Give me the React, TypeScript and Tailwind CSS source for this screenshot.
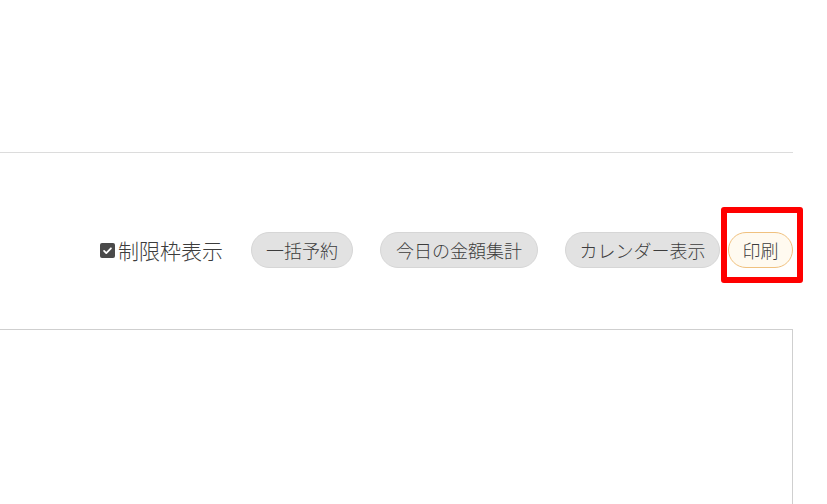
const font = { fontFamily: '"Noto Sans CJK JP", "Noto Sans", sans-serif' };

function PillButton({ label, className = "" }: { label: string; className?: string }) {
  return (
    <button
      type="button"
      className={`flex h-[36px] shrink-0 items-center justify-center rounded-full border border-[#d6d6d6] bg-[#e2e2e2] text-[18px] font-light leading-none text-[#3c3c3c] ${className}`}
    >
      {label}
    </button>
  );
}

export default function App() {
  return (
    <div
      className="h-[504px] w-[827px] overflow-hidden bg-white text-[#3c3c3c]"
      style={font}
    >
      <div className="w-[793px]">
        <div className="h-[153px] border-b border-[#dcdcdc]" />

        <div className="mt-[79px] flex h-[36px] items-center justify-end">
          <label className="flex items-center">
            <span className="flex h-[15px] w-[15px] items-center justify-center rounded-[2px] bg-[#4a4a4a]">
              <svg viewBox="0 0 16 16" className="h-[11px] w-[11px]" fill="none">
                <path
                  d="M3 8.5l3.2 3.2L13 4.8"
                  stroke="#fff"
                  strokeWidth="2.6"
                  strokeLinecap="round"
                  strokeLinejoin="round"
                />
              </svg>
            </span>
            <span className="ml-[3px] text-[21px] font-light leading-none">制限枠表示</span>
          </label>

          <PillButton label="一括予約" className="ml-[28px] w-[102px]" />
          <PillButton label="今日の金額集計" className="ml-[27px] w-[158px]" />
          <PillButton label="カレンダー表示" className="ml-[27px] w-[155px]" />

          <div className="relative ml-[8px]">
            <button
              type="button"
              className="flex h-[36px] w-[65px] items-center justify-center rounded-full border border-[#f0c17f] bg-[#fffaf0] text-[18px] font-light leading-none text-[#3c3c3c]"
            >
              印刷
            </button>
            <span className="pointer-events-none absolute -bottom-[15px] -left-[7px] -right-[10px] -top-[25px] rounded-[3px] border-[6px] border-[#ff0000]" />
          </div>
        </div>

        <div className="mt-[61px] h-[176px] border border-l-0 border-[#cfcfcf] border-b-[#ececec]" />
      </div>
    </div>
  );
}
